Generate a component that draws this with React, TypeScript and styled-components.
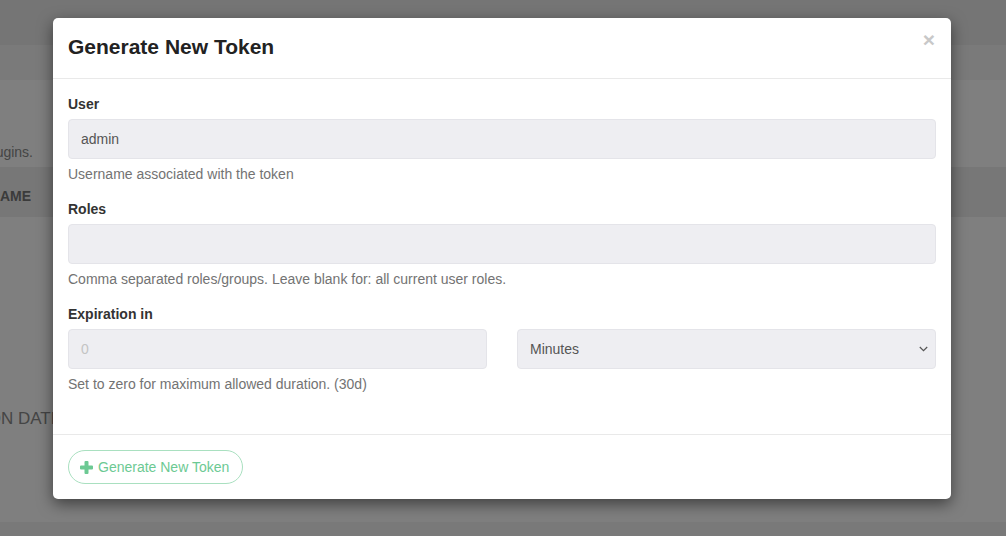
import React from "react";
import styled, { createGlobalStyle } from "styled-components";

const Global = createGlobalStyle`
  html, body { margin: 0; padding: 0; }
  body {
    font-family: "Liberation Sans", Arial, Helvetica, sans-serif;
    font-size: 14px;
    color: #333;
    background: #fff;
    overflow: hidden;
  }
  * { box-sizing: border-box; }
`;

const Screen = styled.div`
  position: relative;
  width: 1006px;
  height: 536px;
  overflow: hidden;
`;

const Page = styled.div`
  width: 1006px;
  height: 536px;
  display: flex;
  flex-direction: column;
`;

const Band = styled.div<{ $h: number; $bg: string }>`
  height: ${(p) => p.$h}px;
  flex: none;
  background: ${(p) => p.$bg};
  display: flex;
  align-items: flex-start;
`;

const Clip = styled.div<{ $w: number; $top: number; $size: number; $bold?: boolean }>`
  width: ${(p) => p.$w}px;
  padding-top: ${(p) => p.$top}px;
  display: flex;
  justify-content: flex-end;
  overflow: hidden;
  white-space: nowrap;
  font-size: ${(p) => p.$size}px;
  font-weight: ${(p) => (p.$bold ? 700 : 400)};
  color: ${(p) => (p.$bold ? "#777" : "#8a8a8a")};
  line-height: 20px;
`;

const Backdrop = styled.div`
  position: absolute;
  top: 0;
  left: 0;
  right: 0;
  bottom: 0;
  background-color: #000000;
  opacity: 0.5;
  z-index: 1;
`;

const Modal = styled.div`
  position: absolute;
  z-index: 2;
  left: 53px;
  top: 18px;
  width: 898px;
  background: #fff;
  border-radius: 5px;
  box-shadow: 0 5px 15px rgba(0, 0, 0, 0.5);
  display: flex;
  flex-direction: column;
`;

const Header = styled.div`
  height: 61px;
  padding: 15px;
  border-bottom: 1px solid #e9e9e9;
  display: flex;
  align-items: flex-start;
  justify-content: space-between;
`;

const Title = styled.h4`
  margin: 0;
  font-size: 21px;
  font-weight: 700;
  color: #222;
  line-height: 26px;
  padding-top: 1px;
`;

const Close = styled.button`
  border: 0;
  background: none;
  padding: 0;
  margin-top: -4px;
  margin-right: 1px;
  font-family: "Liberation Sans", Arial, sans-serif;
  font-size: 21px;
  font-weight: 700;
  line-height: 1;
  color: #c8c8c8;
  cursor: pointer;
`;

const Body = styled.div`
  padding: 15px 15px 25px;
`;

const Group = styled.div`
  margin-bottom: 15px;
`;

const Label = styled.label`
  display: block;
  font-weight: 700;
  color: #333;
  line-height: 20px;
  margin-bottom: 5px;
`;

const Field = styled.div<{ $muted?: boolean; $select?: boolean }>`
  height: 40px;
  background: #eeeef2;
  border: 1px solid #e4e4e9;
  border-radius: 4px;
  padding: 0 ${(p) => (p.$select ? 7 : 12)}px 0 12px;
  display: flex;
  align-items: center;
  justify-content: space-between;
  color: ${(p) => (p.$muted ? "#c4c4c4" : "#555")};
  font-size: 14px;
`;

const Help = styled.div`
  margin-top: 5px;
  color: #737373;
  line-height: 20px;
`;

const Row = styled.div`
  display: grid;
  grid-template-columns: 1fr 1fr;
  column-gap: 30px;
`;

const Footer = styled.div`
  padding: 15px;
  border-top: 1px solid #e9e9e9;
  display: flex;
`;

const GreenButton = styled.button`
  height: 34px;
  padding: 0 13px 0 11px;
  border: 1px solid #a9e0c0;
  border-radius: 17px;
  background: #fff;
  color: #6cc993;
  font-family: "Liberation Sans", Arial, sans-serif;
  font-size: 14px;
  display: flex;
  align-items: center;
  gap: 5px;
`;

const Chevron = () => (
  <svg width="9" height="6" viewBox="0 0 9 6">
    <path d="M0.8 1 L4.5 4.7 L8.2 1" fill="none" stroke="#555" strokeWidth="1.2" />
  </svg>
);

const Plus = () => (
  <svg width="13" height="13" viewBox="0 0 13 13">
    <path
      d="M4.5 1 Q4.5 0 5.5 0 H7.5 Q8.5 0 8.5 1 V4.5 H12 Q13 4.5 13 5.5 V7.5 Q13 8.5 12 8.5 H8.5 V12 Q8.5 13 7.5 13 H5.5 Q4.5 13 4.5 12 V8.5 H1 Q0 8.5 0 7.5 V5.5 Q0 4.5 1 4.5 H4.5 Z"
      fill="#6cc993"
    />
  </svg>
);

export default function App() {
  return (
    <>
      <Global />
      <Screen>
        <Page>
          <Band $h={45} $bg="#ebebeb" />
          <Band $h={35} $bg="#f4f4f4" />
          <Band $h={87} $bg="#ffffff">
            <Clip $w={33} $top={62} $size={14}>
              Tokens can be used to authenticate plugins.
            </Clip>
          </Band>
          <Band $h={50} $bg="#eeeeee">
            <Clip $w={31} $top={19} $size={14} $bold>
              NAME
            </Clip>
          </Band>
          <Band $h={305} $bg="#ffffff">
            <Clip $w={62} $top={192} $size={17}>
              EXPIRATION DATE
            </Clip>
          </Band>
          <Band $h={14} $bg="#f2f2f2" />
        </Page>
        <Backdrop />
        <Modal>
          <Header>
            <Title>Generate New Token</Title>
            <Close aria-label="Close">×</Close>
          </Header>
          <Body>
            <Group>
              <Label>User</Label>
              <Field>admin</Field>
              <Help>Username associated with the token</Help>
            </Group>
            <Group>
              <Label>Roles</Label>
              <Field />
              <Help>Comma separated roles/groups. Leave blank for: all current user roles.</Help>
            </Group>
            <Group>
              <Label>Expiration in</Label>
              <Row>
                <Field $muted>0</Field>
                <Field $select>
                  Minutes
                  <Chevron />
                </Field>
              </Row>
              <Help>Set to zero for maximum allowed duration. (30d)</Help>
            </Group>
          </Body>
          <Footer>
            <GreenButton>
              <Plus />
              Generate New Token
            </GreenButton>
          </Footer>
        </Modal>
      </Screen>
    </>
  );
}
